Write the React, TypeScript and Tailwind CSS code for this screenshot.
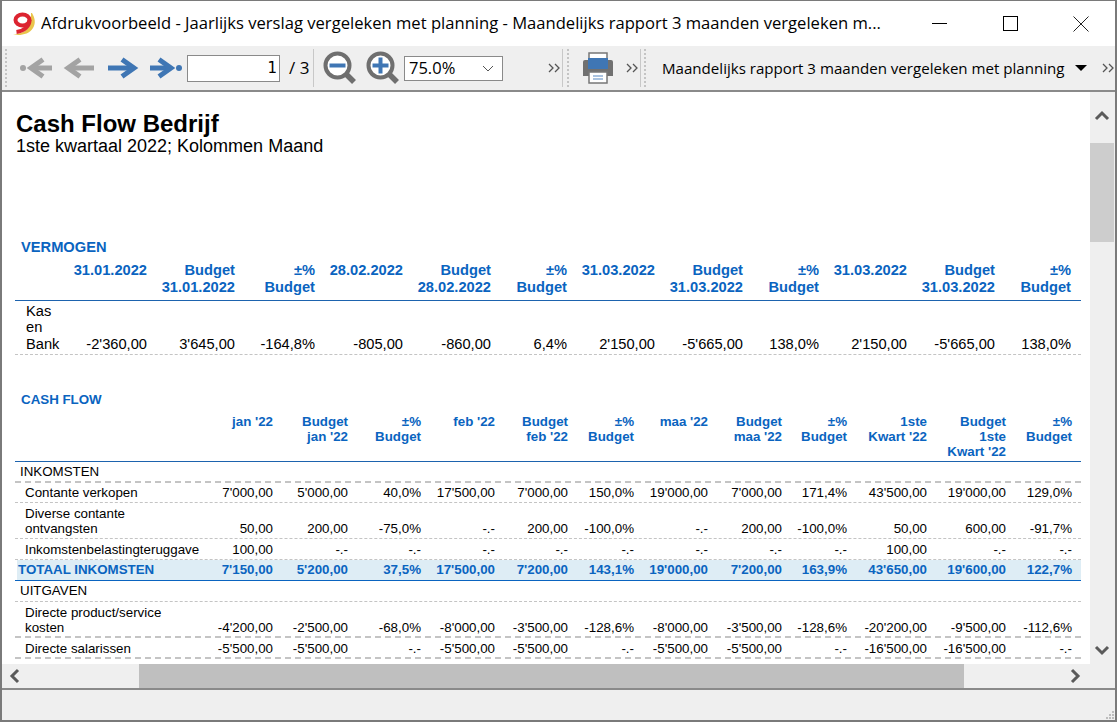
const topHeaders = [
  ["31.01.2022"], ["Budget", "31.01.2022"], ["±%", "Budget"],
  ["28.02.2022"], ["Budget", "28.02.2022"], ["±%", "Budget"],
  ["31.03.2022"], ["Budget", "31.03.2022"], ["±%", "Budget"],
  ["31.03.2022"], ["Budget", "31.03.2022"], ["±%", "Budget"],
];
const topRow = ["-2'360,00", "3'645,00", "-164,8%", "-805,00", "-860,00", "6,4%", "2'150,00", "-5'665,00", "138,0%", "2'150,00", "-5'665,00", "138,0%"];

const cashHeaders = [
  ["jan '22"], ["Budget", "jan '22"], ["±%", "Budget"],
  ["feb '22"], ["Budget", "feb '22"], ["±%", "Budget"],
  ["maa '22"], ["Budget", "maa '22"], ["±%", "Budget"],
  ["1ste", "Kwart '22"], ["Budget", "1ste", "Kwart '22"], ["±%", "Budget"],
];

const topCols = "grid-cols-[45px_87px_88px_80px_88px_88px_76px_88px_88px_76px_88px_88px_76px_10px]";
const cashCols = "grid-cols-[190px_68px_75px_73px_74px_73px_66px_74px_74px_65px_80px_79px_66px_9px]";
const totalCols = "grid-cols-[188px_68px_75px_73px_74px_73px_66px_74px_74px_65px_80px_79px_66px_9px]";

function Logo() {
  return (
    <svg width="24" height="24" viewBox="0 0 24 24">
      <path d="M20 1c3 5 4 10 1 15-3 5-9 7-15 7l-5-1c7 0 12-2 15-6 3-5 3-10 3-15z" fill="#e9c54c" />
      <ellipse cx="10.5" cy="8" rx="7" ry="5.5" fill="none" stroke="#dc2430" strokeWidth="4" />
      <path d="M17.5 8c0 6-5 11-13 12" fill="none" stroke="#dc2430" strokeWidth="4" />
    </svg>
  );
}

function Arrow({ dir, color, dot }: { dir: "left" | "right"; color: string; dot?: boolean }) {
  const body = dot ? (
    <>
      <path d="M0 11h21" stroke={color} strokeWidth="5" />
      <path d="M9 2.5l12 8.5-12 8.5" fill="none" stroke={color} strokeWidth="5" />
      <circle cx="29" cy="11" r="3" fill={color} />
    </>
  ) : (
    <>
      <path d="M1 11h26" stroke={color} strokeWidth="5" />
      <path d="M15 2.5l12 8.5-12 8.5" fill="none" stroke={color} strokeWidth="5" />
    </>
  );
  return (
    <svg width="32" height="22" viewBox="0 0 32 22">
      {dir === "left" ? <g transform="matrix(-1 0 0 1 32 0)">{body}</g> : body}
    </svg>
  );
}

function Zoom({ plus }: { plus?: boolean }) {
  return (
    <svg width="34" height="34" viewBox="0 0 34 34">
      <path d="M23 23l8 8" stroke="#6f6f6f" strokeWidth="5.5" />
      <circle cx="14.5" cy="14.5" r="12" fill="#fff" stroke="#6f6f6f" strokeWidth="4" />
      <path d="M6.5 14.5h16" stroke="#3f76b4" strokeWidth="4" />
      {plus && <path d="M14.5 6.5v16" stroke="#3f76b4" strokeWidth="4" />}
    </svg>
  );
}

function Printer() {
  return (
    <svg width="32" height="32" viewBox="0 0 32 32">
      <rect x="7" y="1" width="18" height="8" fill="#fff" stroke="#777" strokeWidth="1.5" />
      <path d="M3 8h26a2 2 0 0 1 2 2v14H1V10a2 2 0 0 1 2-2z" fill="#707070" />
      <rect x="6" y="6" width="20" height="11" fill="#3f76b4" />
      <rect x="7" y="20" width="18" height="11" fill="#fff" stroke="#777" strokeWidth="1.5" />
      <path d="M11 24h10M11 27h10" stroke="#8fb0d6" strokeWidth="1.5" />
    </svg>
  );
}

function Grip() {
  return <div className="h-[38px] w-[3px] shrink-0 border-l-2 border-dotted border-[#c4c4c4]" />;
}

function More({ className }: { className: string }) {
  return (
    <svg className={className} width="12" height="10" viewBox="0 0 12 10">
      <path d="M1 1l4 4-4 4M7 1l4 4-4 4" fill="none" stroke="#555" strokeWidth="1.3" />
    </svg>
  );
}

function Sep({ className }: { className: string }) {
  return <div className={`h-[38px] w-px bg-[#c8c8c8] ${className}`} />;
}

function Chevron({ d, className }: { d: string; className?: string }) {
  return (
    <svg className={className} width="16" height="16" viewBox="0 0 16 16">
      <path d={d} fill="none" stroke="#5a5a5a" strokeWidth="3" />
    </svg>
  );
}

function Row({ label, cells, h, thick }: { label: string; cells: string[]; h: string; thick?: boolean }) {
  return (
    <div className={`grid ${cashCols} ${h} items-end border-dashed border-[#c4c4c4] ${thick ? "border-b-2" : "border-b"} text-black`}>
      <div className={`whitespace-pre-line pl-[10px] leading-[15px] ${thick ? "pb-[1px]" : "pb-[2px]"}`}>{label}</div>
      {cells.map((c, i) => (
        <div key={i} className={`text-right leading-[15px] ${thick ? "pb-[1px]" : "pb-[2px]"}`}>{c}</div>
      ))}
    </div>
  );
}

function TotalRow({ label, cells }: { label: string; cells: string[] }) {
  return (
    <div className="h-[21px] border-b border-[#0a64c0] pl-[2px]">
      <div className={`grid ${totalCols} h-full items-end bg-[#deedf5] font-bold text-[#0a64c0]`}>
        <div className="whitespace-nowrap pb-[3px] pl-[1px] leading-[15px]">{label}</div>
        {cells.map((c, i) => (
          <div key={i} className="pb-[3px] text-right leading-[15px]">{c}</div>
        ))}
      </div>
    </div>
  );
}

function GroupRow({ label, thick }: { label: string; thick?: boolean }) {
  return <div className={`h-[21px] border-dashed border-[#c4c4c4] pl-[5px] pt-[2px] leading-[15px] ${thick ? "border-b-2" : "border-b"}`}>{label}</div>;
}

export default function App() {
  return (
    <div className="h-[722px] w-[1117px] overflow-hidden border-x-2 border-t border-b-2 border-[#7a7a7a] bg-white font-['Liberation_Sans',sans-serif]">
      <div className="flex h-[45px] items-center pl-[10px] font-['Open_Sans',sans-serif] text-[16.6px] text-black">
        <Logo />
        <span className="ml-[5px] w-[845px] truncate">Afdrukvoorbeeld - Jaarlijks verslag vergeleken met planning - Maandelijks rapport 3 maanden vergeleken m...</span>
        <div className="ml-[46px] h-px w-[15px] bg-black" />
        <div className="ml-[56px] h-[15px] w-[15px] border border-black" />
        <svg className="ml-[55px]" width="16" height="16" viewBox="0 0 16 16"><path d="M0.5 0.5l15 15M15.5 0.5l-15 15" stroke="#222" strokeWidth="1" /></svg>
      </div>

      <div className="flex h-[46px] items-center border-b-2 border-[#8a8a8a] bg-[#efefef] pl-[3px] font-['Open_Sans',sans-serif] text-black">
        <Grip />
        <div className="ml-[12px]"><Arrow dir="left" color="#a3a3a3" dot /></div>
        <div className="ml-[11px]"><Arrow dir="left" color="#a3a3a3" /></div>
        <div className="ml-[12px]"><Arrow dir="right" color="#3f76b4" /></div>
        <div className="ml-[11px]"><Arrow dir="right" color="#3f76b4" dot /></div>
        <div className="ml-[5px] flex h-[27px] w-[93px] items-center justify-end border border-[#8a8a8a] bg-white pr-[2px] font-['DejaVu_Sans',sans-serif] text-[15px]">1</div>
        <span className="ml-[9px] w-[24px] text-[17px]">/ 3</span>
        <Sep className="" />
        <div className="ml-[9px]"><Zoom /></div>
        <div className="ml-[9px]"><Zoom plus /></div>
        <div className="ml-[4px] flex h-[25px] w-[99px] items-center justify-between border border-[#8a8a8a] bg-white pl-[4px] pr-[8px] text-[16.5px]">
          <span>75.0%</span>
          <svg width="12" height="7" viewBox="0 0 12 7"><path d="M1 1l5 5 5-5" fill="none" stroke="#555" /></svg>
        </div>
        <More className="ml-[45px]" />
        <Sep className="ml-[2px]" />
        <div className="ml-[4px]"><Grip /></div>
        <div className="ml-[12px]"><Printer /></div>
        <More className="ml-[12px]" />
        <Sep className="ml-[2px]" />
        <div className="ml-[3px]"><Grip /></div>
        <span className="ml-[15px] w-[402px] whitespace-nowrap text-[15.1px]">Maandelijks rapport 3 maanden vergeleken met planning</span>
        <div className="ml-[11px] h-0 w-0 border-x-[6px] border-t-[6px] border-x-transparent border-t-black" />
        <More className="ml-[15px]" />
      </div>

      <div className="flex h-[572px]">
        <div className="w-[1088px] overflow-hidden">
          <div className="pl-[14px] pt-[19px] text-black">
            <div className="text-[24px] font-bold leading-[26px]">Cash Flow Bedrijf</div>
            <div className="text-[18px] leading-[18px]">1ste kwartaal 2022; Kolommen Maand</div>
          </div>

          <div className="ml-[13px] mt-[84px] w-[1066px] text-[14.67px]">
            <div className="pl-[6px] font-bold leading-[16px] text-[#0a64c0]">VERMOGEN</div>
            <div className={`mt-[7px] grid ${topCols} h-[39px] border-b border-[#1d63ae] font-bold leading-[17px] text-[#0a64c0]`}>
              <div />
              {topHeaders.map((h, i) => (
                <div key={i} className="text-right">
                  {h.map((t) => <div key={t}>{t}</div>)}
                </div>
              ))}
            </div>
            <div className={`grid ${topCols} h-[54px] items-end border-b border-dashed border-[#c4c4c4] pb-[2px] leading-[16.5px] text-black`}>
              <div className="pl-[11px]">Kas en Bank</div>
              {topRow.map((c, i) => (
                <div key={i} className="text-right">{c}</div>
              ))}
            </div>
          </div>

          <div className="ml-[13px] mt-[37px] w-[1066px] text-[13.33px]">
            <div className="pl-[6px] font-bold leading-[16px] text-[#0a64c0]">CASH FLOW</div>
            <div className={`mt-[6px] grid ${cashCols} h-[48px] border-b border-[#1d63ae] font-bold leading-[15px] text-[#0a64c0]`}>
              <div />
              {cashHeaders.map((h, i) => (
                <div key={i} className="text-right">
                  {h.map((t) => <div key={t}>{t}</div>)}
                </div>
              ))}
            </div>
            <GroupRow thick label="INKOMSTEN" />
            <Row h="h-[20px]" label="Contante verkopen" cells={["7'000,00", "5'000,00", "40,0%", "17'500,00", "7'000,00", "150,0%", "19'000,00", "7'000,00", "171,4%", "43'500,00", "19'000,00", "129,0%"]} />
            <Row h="h-[36px]" label={"Diverse contante\nontvangsten"} cells={["50,00", "200,00", "-75,0%", "-.-", "200,00", "-100,0%", "-.-", "200,00", "-100,0%", "50,00", "600,00", "-91,7%"]} />
            <Row h="h-[21px]" label="Inkomstenbelastingteruggave" cells={["100,00", "-.-", "-.-", "-.-", "-.-", "-.-", "-.-", "-.-", "-.-", "100,00", "-.-", "-.-"]} />
            <TotalRow label="TOTAAL INKOMSTEN" cells={["7'150,00", "5'200,00", "37,5%", "17'500,00", "7'200,00", "143,1%", "19'000,00", "7'200,00", "163,9%", "43'650,00", "19'600,00", "122,7%"]} />
            <GroupRow label="UITGAVEN" />
            <Row thick h="h-[36px]" label={"Directe product/service\nkosten"} cells={["-4'200,00", "-2'500,00", "-68,0%", "-8'000,00", "-3'500,00", "-128,6%", "-8'000,00", "-3'500,00", "-128,6%", "-20'200,00", "-9'500,00", "-112,6%"]} />
            <Row thick h="h-[21px]" label="Directe salarissen" cells={["-5'500,00", "-5'500,00", "-.-", "-5'500,00", "-5'500,00", "-.-", "-5'500,00", "-5'500,00", "-.-", "-16'500,00", "-16'500,00", "-.-"]} />
          </div>
        </div>

        <div className="flex w-[25px] flex-col bg-[#efefef] pr-px">
          <div className="flex h-[51px] items-center justify-center pr-px">
            <Chevron d="M2 11l6-6 6 6" className="mb-[3px]" />
          </div>
          <div className="h-[99px] bg-[#cdcdcd]" />
          <div className="flex flex-1 items-end justify-center pb-[6px]">
            <Chevron d="M2 5l6 6 6-6" />
          </div>
        </div>
      </div>

      <div className="flex h-[26px] border-b-2 border-[#8a8a8a] bg-[#efefef]">
        <div className="flex w-[137px] items-center pl-[5px]">
          <Chevron d="M11 2L5 8l6 6" />
        </div>
        <div className="w-[825px] bg-[#bfbfbf]" />
        <div className="flex flex-1 items-center pl-[103px]">
          <Chevron d="M5 2l6 6-6 6" />
        </div>
      </div>

      <div className="relative h-[30px] bg-[#efefef]">
        <div className="absolute bottom-[1px] right-[1px] grid grid-cols-3 gap-px">
          <div /><div /><div className="h-[2px] w-[2px] bg-[#bdbdbd]" />
          <div /><div className="h-[2px] w-[2px] bg-[#bdbdbd]" /><div className="h-[2px] w-[2px] bg-[#bdbdbd]" />
          <div className="h-[2px] w-[2px] bg-[#bdbdbd]" /><div className="h-[2px] w-[2px] bg-[#bdbdbd]" /><div className="h-[2px] w-[2px] bg-[#bdbdbd]" />
        </div>
      </div>
    </div>
  );
}
